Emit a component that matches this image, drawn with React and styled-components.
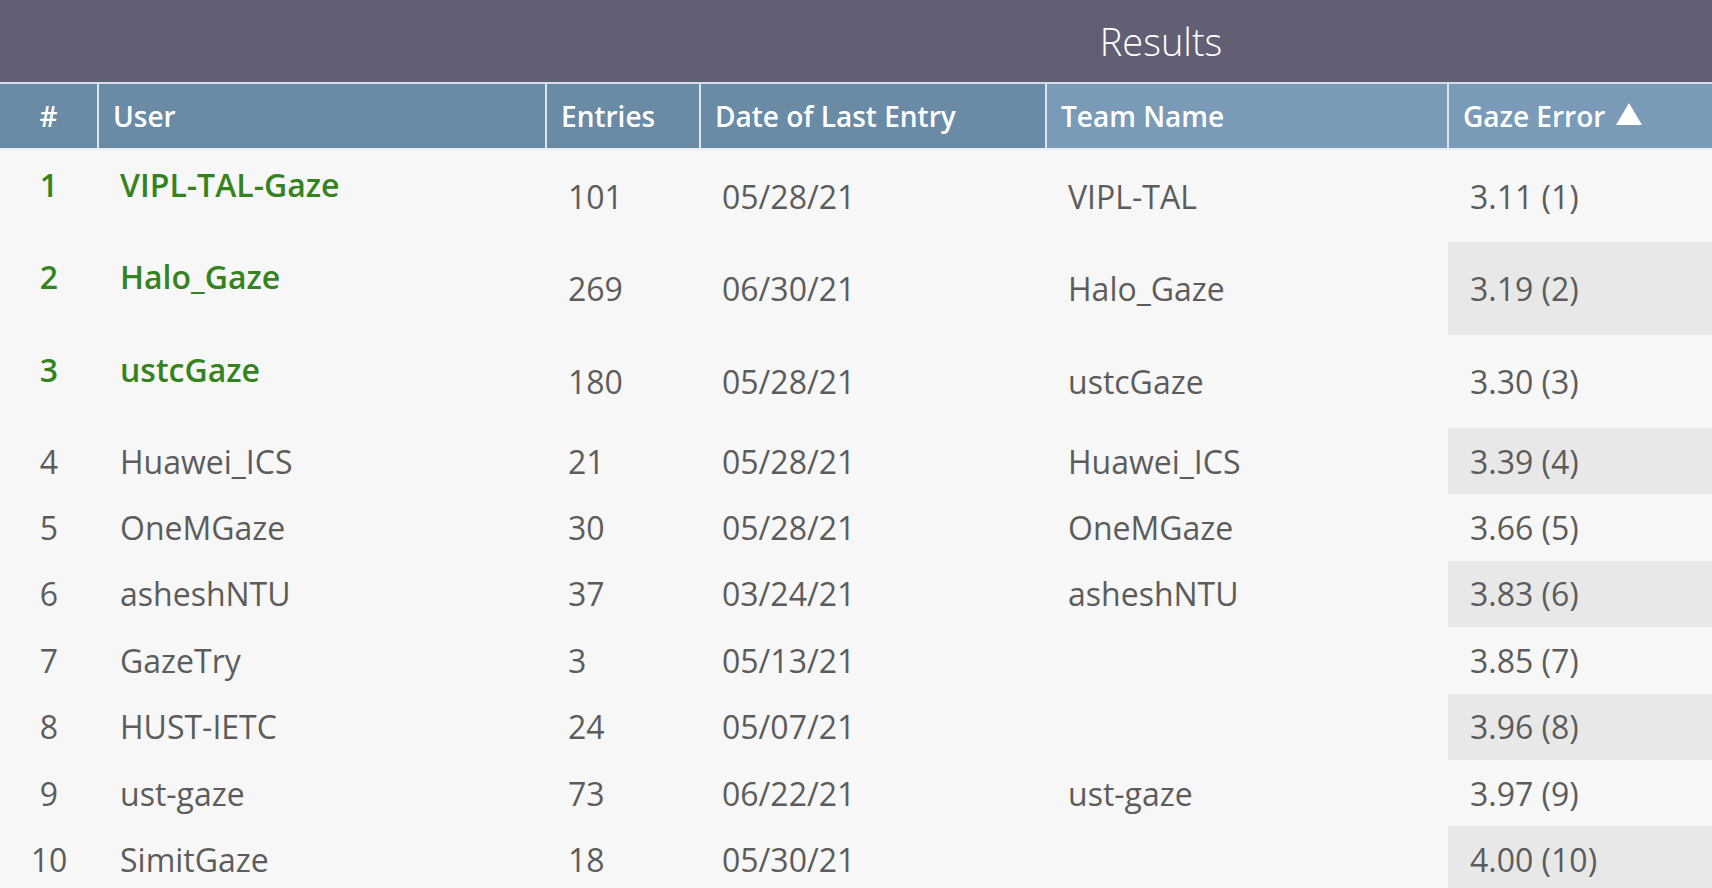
import React from "react";
import styled, { createGlobalStyle } from "styled-components";

const GlobalStyle = createGlobalStyle`
  html, body {
    margin: 0;
    padding: 0;
    background: #f7f7f7;
    overflow: hidden;
  }
  body {
    font-family: "Open Sans", "Noto Sans", sans-serif;
  }
`;

const results = [
  { rank: 1, user: "VIPL-TAL-Gaze", entries: 101, date: "05/28/21", team: "VIPL-TAL", error: "3.11 (1)" },
  { rank: 2, user: "Halo_Gaze", entries: 269, date: "06/30/21", team: "Halo_Gaze", error: "3.19 (2)" },
  { rank: 3, user: "ustcGaze", entries: 180, date: "05/28/21", team: "ustcGaze", error: "3.30 (3)" },
  { rank: 4, user: "Huawei_ICS", entries: 21, date: "05/28/21", team: "Huawei_ICS", error: "3.39 (4)" },
  { rank: 5, user: "OneMGaze", entries: 30, date: "05/28/21", team: "OneMGaze", error: "3.66 (5)" },
  { rank: 6, user: "asheshNTU", entries: 37, date: "03/24/21", team: "asheshNTU", error: "3.83 (6)" },
  { rank: 7, user: "GazeTry", entries: 3, date: "05/13/21", team: "", error: "3.85 (7)" },
  { rank: 8, user: "HUST-IETC", entries: 24, date: "05/07/21", team: "", error: "3.96 (8)" },
  { rank: 9, user: "ust-gaze", entries: 73, date: "06/22/21", team: "ust-gaze", error: "3.97 (9)" },
  { rank: 10, user: "SimitGaze", entries: 18, date: "05/30/21", team: "", error: "4.00 (10)" },
];

const columns = [
  { label: "#", width: 98, center: true },
  { label: "User", width: 448 },
  { label: "Entries", width: 154 },
  { label: "Date of Last Entry", width: 346 },
  { label: "Team Name", width: 402, light: true },
  { label: "Gaze Error", width: 264, light: true, sorted: true },
];

const Table = styled.table`
  width: 1712px;
  border-collapse: collapse;
  table-layout: fixed;
`;

const TitleCell = styled.th`
  height: 82px;
  padding: 0 0 0 610px;
  background: #625f74;
  color: #ffffff;
  font-size: 38px;
  font-weight: 300;
  text-align: center;
  border-bottom: 2px solid #d5dde6;
`;

const HeadCell = styled.th`
  height: 64px;
  padding: 0 0 0 ${(p) => (p.$center ? 0 : 14)}px;
  background: ${(p) => (p.$light ? "#7a9bb7" : "#6a8ba6")};
  color: #ffffff;
  font-size: 28px;
  font-weight: 600;
  text-align: ${(p) => (p.$center ? "center" : "left")};
  white-space: nowrap;
  border-left: 2px solid #dce6ef;
  border-bottom: 2px solid #e9eef3;
  &:first-child {
    border-left: none;
  }
`;

const SortArrow = styled.span`
  display: inline-block;
  width: 0;
  height: 0;
  margin-left: 11px;
  border-left: 13px solid transparent;
  border-right: 13px solid transparent;
  border-bottom: 22px solid #ffffff;
  vertical-align: 2px;
`;

const Row = styled.tr`
  height: ${(p) => (p.$top ? 93 : 66.4)}px;
`;

const Cell = styled.td`
  padding: 0 0 0 22px;
  font-size: 32px;
  color: #5c5c5c;
  white-space: nowrap;
  vertical-align: middle;
  background: ${(p) => (p.$shade ? "#e8e8e8" : "transparent")};
`;

const RankCell = styled(Cell)`
  padding: ${(p) => (p.$top ? "13px 0 0" : "0")};
  text-align: center;
  vertical-align: ${(p) => (p.$top ? "top" : "middle")};
  color: ${(p) => (p.$top ? "#35831f" : "#5c5c5c")};
  font-weight: ${(p) => (p.$top ? 600 : 400)};
`;

const UserCell = styled(Cell)`
  padding-top: ${(p) => (p.$top ? 13 : 0)}px;
  vertical-align: ${(p) => (p.$top ? "top" : "middle")};
  color: ${(p) => (p.$top ? "#35831f" : "#5c5c5c")};
  font-weight: ${(p) => (p.$top ? 600 : 400)};
`;

export default function App() {
  return (
    <>
      <GlobalStyle />
      <Table>
        <colgroup>
          {columns.map((c) => (
            <col key={c.label} style={{ width: c.width }} />
          ))}
        </colgroup>
        <thead>
          <tr>
            <TitleCell colSpan={6}>Results</TitleCell>
          </tr>
          <tr>
            {columns.map((c) => (
              <HeadCell key={c.label} $center={c.center} $light={c.light}>
                {c.label}
                {c.sorted && <SortArrow />}
              </HeadCell>
            ))}
          </tr>
        </thead>
        <tbody>
          {results.map((r) => {
            const top = r.rank <= 3;
            const shade = r.rank % 2 === 0;
            return (
              <Row key={r.rank} $top={top}>
                <RankCell $top={top}>{r.rank}</RankCell>
                <UserCell $top={top}>{r.user}</UserCell>
                <Cell>{r.entries}</Cell>
                <Cell>{r.date}</Cell>
                <Cell>{r.team}</Cell>
                <Cell $shade={shade}>{r.error}</Cell>
              </Row>
            );
          })}
        </tbody>
      </Table>
    </>
  );
}
